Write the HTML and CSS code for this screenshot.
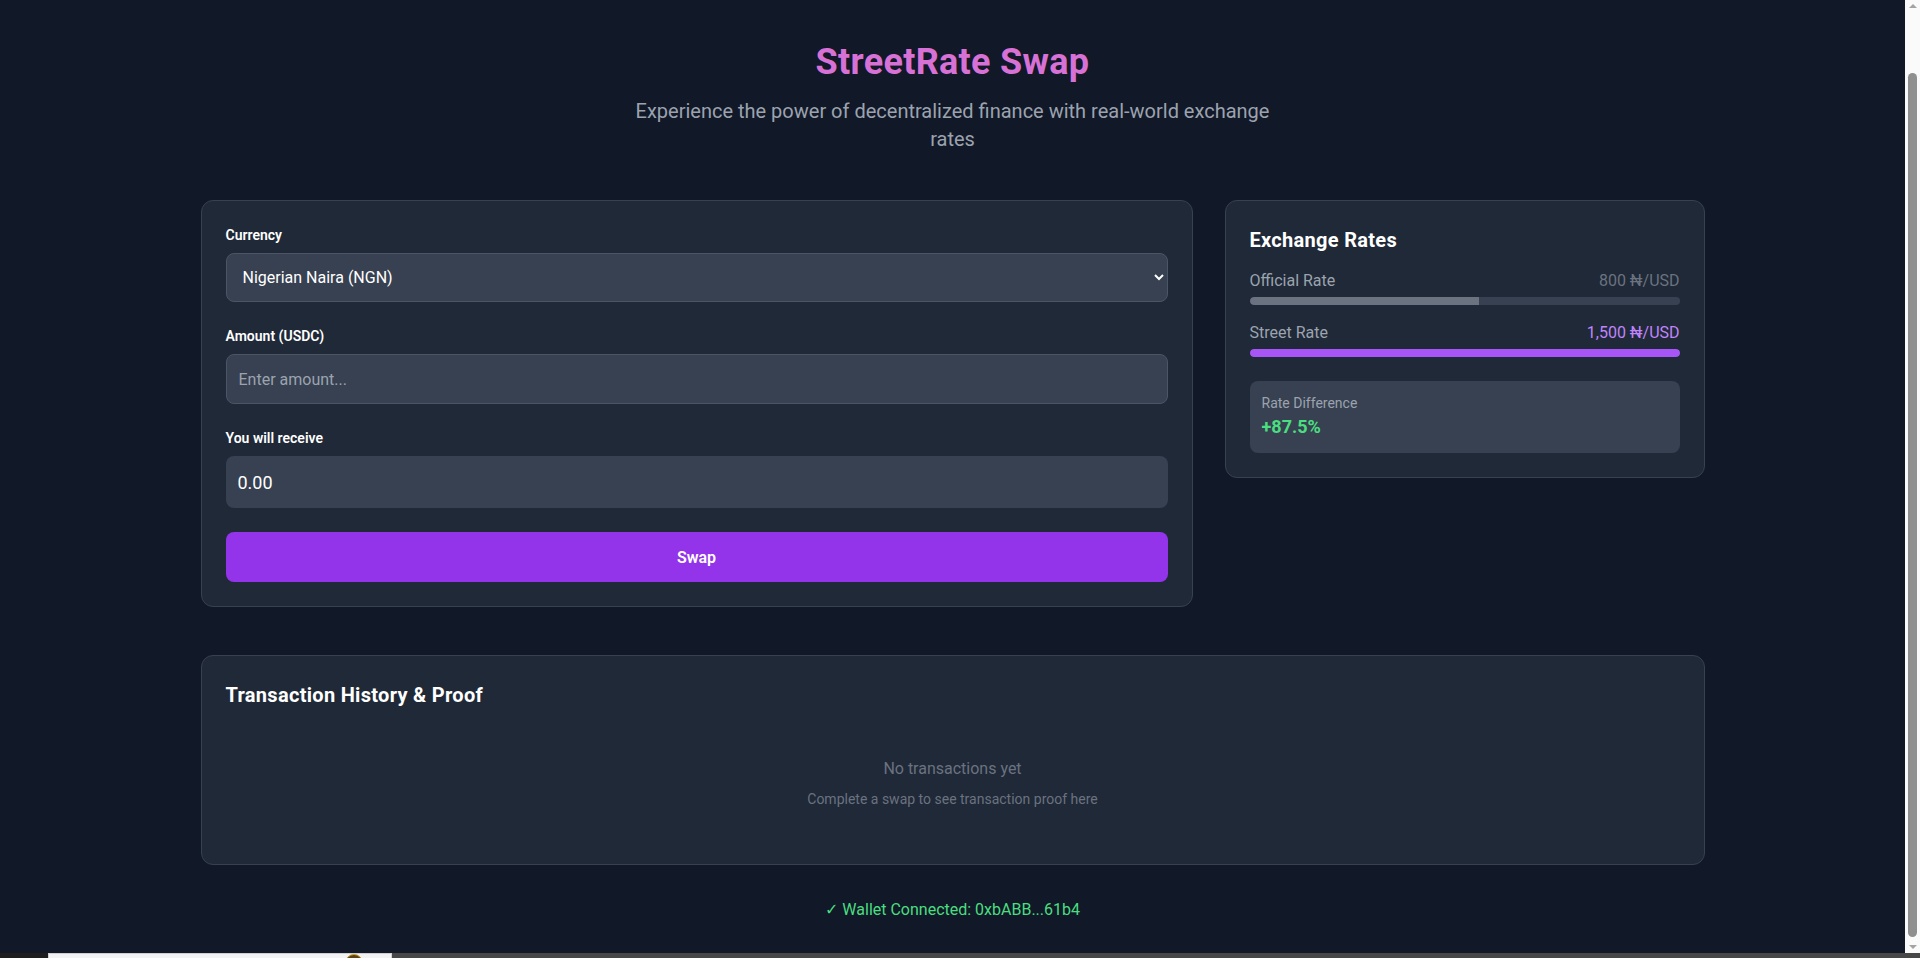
FILE: index.html
```html
<!DOCTYPE html>
<html lang="en">
<head>
<meta charset="utf-8">
<title>StreetRate Swap</title>
<link rel="stylesheet" href="styles.css">
</head>
<body>
<div class="container">
  <header class="header">
    <h1 class="title">StreetRate Swap</h1>
    <p class="subtitle">Experience the power of decentralized finance with real-world exchange rates</p>
  </header>

  <div class="grid">
    <section class="card swap-card">
      <div class="field">
        <label class="label" for="currency">Currency</label>
        <select id="currency" class="select">
          <option>Nigerian Naira (NGN)</option>
          <option>Ghanaian Cedi (GHS)</option>
          <option>Kenyan Shilling (KES)</option>
        </select>
      </div>
      <div class="field">
        <label class="label" for="amount">Amount (USDC)</label>
        <input id="amount" class="input" type="text" placeholder="Enter amount...">
      </div>
      <div class="field">
        <label class="label">You will receive</label>
        <div class="output">0.00</div>
      </div>
      <button class="swap-btn" type="button">Swap</button>
    </section>

    <section class="card rates-card">
      <h2 class="card-title">Exchange Rates</h2>
      <div class="rate">
        <div class="rate-row">
          <span class="rate-label">Official Rate</span>
          <span class="rate-value official">800 ₦/USD</span>
        </div>
        <div class="bar"><div class="bar-fill official-fill" style="width: 53.33%"></div></div>
      </div>
      <div class="rate">
        <div class="rate-row">
          <span class="rate-label">Street Rate</span>
          <span class="rate-value street">1,500 ₦/USD</span>
        </div>
        <div class="bar"><div class="bar-fill street-fill" style="width: 100%"></div></div>
      </div>
      <div class="diff">
        <div class="diff-label">Rate Difference</div>
        <div class="diff-value">+87.5%</div>
      </div>
    </section>
  </div>

  <section class="card history-card">
    <h2 class="card-title">Transaction History &amp; Proof</h2>
    <div class="empty">
      <p class="empty-title">No transactions yet</p>
      <p class="empty-sub">Complete a swap to see transaction proof here</p>
    </div>
  </section>

  <p class="wallet">✓ Wallet Connected: 0xbABB...61b4</p>
</div>

<div class="scrollbar" aria-hidden="true">
  <span class="scroll-arrow up"></span>
  <span class="scroll-thumb"></span>
  <span class="scroll-arrow down"></span>
</div>

<div class="bottom-strip" aria-hidden="true">
  <div class="strip-dark"></div>
  <div class="strip-box"><span class="strip-dot"></span></div>
  <div class="strip-rest"></div>
</div>
</body>
</html>
```

FILE: styles.css
```css
* {
  box-sizing: border-box;
}

body {
  margin: 0;
  padding-right: 15px;
  background: #111827;
  color: #ffffff;
  font-family: "Segoe UI", Roboto, "DejaVu Sans", sans-serif;
  font-size: 16px;
  line-height: 24px;
}

.container {
  max-width: 1536px;
  margin: 0 auto;
  padding: 42px 16px 40px;
}

.header {
  text-align: center;
  margin-bottom: 47px;
}

.title {
  margin: 0 0 15px;
  font-size: 36px;
  line-height: 40px;
  font-weight: 700;
  letter-spacing: 0.3px;
  color: #d771d6;
}

.subtitle {
  margin: 0 auto;
  max-width: 672px;
  font-size: 20px;
  line-height: 28px;
  color: #9ca3af;
}

.grid {
  display: grid;
  grid-template-columns: repeat(3, minmax(0, 1fr));
  gap: 32px;
  align-items: start;
}

.card {
  background: #1f2937;
  border: 1px solid #374151;
  border-radius: 12px;
  padding: 24px;
}

.swap-card {
  grid-column: span 2;
  display: flex;
  flex-direction: column;
  gap: 24px;
}

.field {
  display: flex;
  flex-direction: column;
}

.label {
  display: block;
  font-size: 14px;
  line-height: 20px;
  font-weight: 600;
  color: #ffffff;
  margin-bottom: 8px;
}

.select {
  width: 100%;
  height: 49px;
  padding: 0 12px;
  background: #374151;
  border: 1px solid #4b5563;
  border-radius: 8px;
  color: #ffffff;
  font-family: inherit;
  font-size: 16px;
  outline: none;
}

.input {
  width: 100%;
  height: 50px;
  padding: 12px;
  background: #374151;
  border: 1px solid #4b5563;
  border-radius: 8px;
  color: #ffffff;
  font-family: inherit;
  font-size: 16px;
  line-height: 24px;
  outline: none;
}

.input::placeholder {
  color: #9ca3af;
}

.output {
  padding: 13px 12px 11px;
  background: #374151;
  border-radius: 8px;
  font-size: 18px;
  line-height: 28px;
  color: #ffffff;
}

.swap-btn {
  width: 100%;
  height: 50px;
  border: none;
  border-radius: 8px;
  background: #9333ea;
  color: #ffffff;
  font-family: inherit;
  font-size: 16px;
  font-weight: 600;
  cursor: pointer;
}

.card-title {
  margin: 0 0 16px;
  padding-top: 1px;
  height: 28px;
  font-size: 20px;
  line-height: 28px;
  font-weight: 700;
  letter-spacing: 0.3px;
  color: #ffffff;
}

.rate + .rate {
  margin-top: 16px;
}

.rate-row {
  display: flex;
  justify-content: space-between;
  margin-bottom: 4px;
}

.rate-label {
  color: #9ca3af;
}

.rate-value.official {
  color: #6b7280;
}

.rate-value.street {
  color: #c084fc;
}

.bar {
  height: 8px;
  background: #374151;
  border-radius: 9999px;
  overflow: hidden;
}

.bar-fill {
  height: 100%;
}

.official-fill {
  background: #6b7280;
  border-radius: 9999px 0 0 9999px;
}

.street-fill {
  background: #a855f7;
  border-radius: 9999px;
}

.diff {
  margin-top: 24px;
  padding: 12px;
  background: #374151;
  border-radius: 8px;
}

.diff-label {
  font-size: 14px;
  line-height: 20px;
  color: #9ca3af;
}

.diff-value {
  font-size: 18px;
  line-height: 28px;
  font-weight: 700;
  color: #4ade80;
}

.history-card {
  margin-top: 48px;
}

.empty {
  text-align: center;
  padding: 33px 0 31px;
}

.empty-title {
  margin: 0;
  color: #6b7280;
}

.empty-sub {
  margin: 8px 0 0;
  font-size: 14px;
  line-height: 20px;
  color: #6b7280;
}

.wallet {
  margin: 33px 0 0;
  text-align: center;
  color: #4ade80;
}

/* browser chrome overlays */
.scrollbar {
  position: fixed;
  top: 0;
  right: 0;
  width: 15px;
  height: 100%;
  background: #fafafa;
  z-index: 5;
}

.scroll-arrow {
  position: absolute;
  left: 4px;
  width: 0;
  height: 0;
  border-left: 4px solid transparent;
  border-right: 4px solid transparent;
}

.scroll-arrow.up {
  top: 4px;
  border-bottom: 4px solid #a3a3a3;
}

.scroll-arrow.down {
  bottom: 9px;
  border-top: 4px solid #a3a3a3;
}

.scroll-thumb {
  position: absolute;
  top: 73px;
  left: 3px;
  width: 9px;
  height: 864px;
  border-radius: 5px;
  background: #8f8f8f;
}

.bottom-strip {
  position: fixed;
  left: 0;
  right: 0;
  bottom: 0;
  height: 5px;
  display: flex;
  z-index: 10;
}

.strip-dark {
  width: 48px;
  background: #1e1e1e;
}

.strip-box {
  width: 344px;
  background: #f2f2f2;
  border: 1px solid #cfcfcf;
  border-bottom: none;
  position: relative;
  overflow: hidden;
}

.strip-dot {
  position: absolute;
  left: 296px;
  top: 0;
  width: 18px;
  height: 18px;
  border-radius: 50%;
  background: #5a4316;
  border: 1px solid #c9a227;
}

.strip-rest {
  flex: 1;
  background: #474747;
}
```
